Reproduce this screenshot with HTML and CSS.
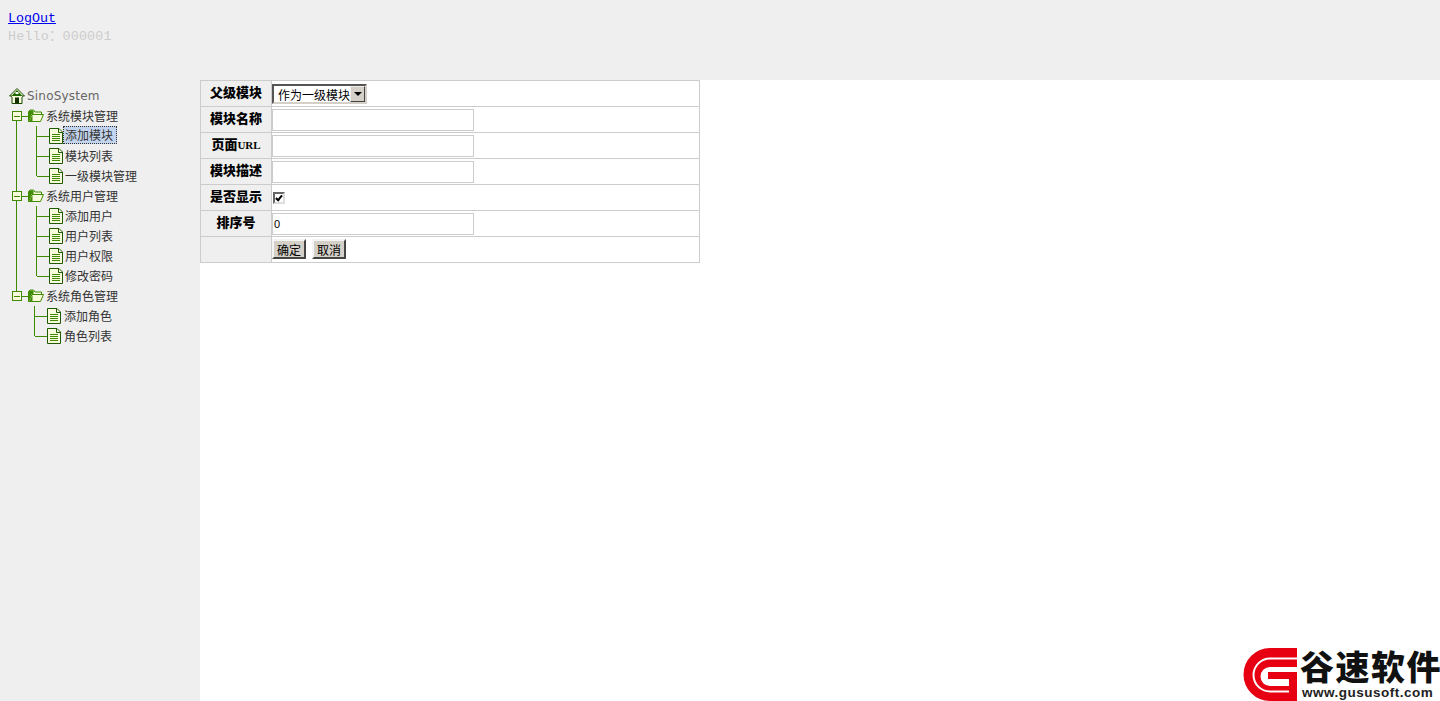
FILE: index.html
```html
<!DOCTYPE html>
<html>
<head>
    <title>SinoSystem</title>
    <link rel="stylesheet" href="styles.css">
</head>
<body>
    <svg class="defs" width="0" height="0">
        <symbol id="home" viewBox="0 0 16 16">
            <path d="M8 .5L.5 8H3v7.500h10V8h2.500z" fill="#f8fbdc" stroke="#1a4a00"/>
            <path d="M2.500 8L8 2l5.500 6z" fill="#1f6a00"/>
            <rect x="6.500" y="4" width="3" height="2" fill="#fff"/>
            <rect x="6" y="9.500" width="4" height="6" fill="#143000"/>
            <path d="M3 8h10v1H3z" fill="#f8fbdc"/>
        </symbol>
        <symbol id="folder" viewBox="0 0 16 14">
            <path d="M.5 12.500V2.500l1.500-1.500h3.500l1.500 2h6.500v2.500H4z" fill="#f8fbdc" stroke="#3f8a00"/>
            <path d="M.5 12.500L4 5.500h11.500l-3 7z" fill="#f8fbdc" stroke="#3f8a00"/>
            <path d="M1 1.500h4.500V5H3.500L1 11z" fill="#3f8a00"/>
            <path d="M1 13l3.500-7v7z" fill="#3f8a00"/>
        </symbol>
        <symbol id="doc" viewBox="0 0 14 16">
            <path d="M.5.500h9.500l3.500 3.500v11.500H.5z" fill="#f8fbdc" stroke="#1f5a00"/>
            <path d="M9.500.500v4h4" fill="none" stroke="#1f5a00"/>
            <path d="M3 6.500h8M3 8.500h8M3 10.500h8M3 12.500h8" stroke="#3f8a00"/>
        </symbol>
        <symbol id="minus" viewBox="0 0 10 10">
            <rect x=".5" y=".5" width="9" height="9" fill="#f8fbdc" stroke="#3f8a00"/>
            <path d="M2 5.500h6" stroke="#3f8a00"/>
        </symbol>
    </svg>

    <div class="top">
        <a href="#" class="logout">LogOut</a><br>
        <span class="hello">Hello：000001</span>
    </div>

    <div class="container">
        <div class="left">
            <div class="tree">
                <div class="node root">
                    <svg class="home"><use href="#home"/></svg>
                    <span class="root-text">SinoSystem</span>
                </div>

                <div class="node group">
                    <span class="pipe first"></span>
                    <svg class="minus"><use href="#minus"/></svg>
                    <span class="dash"></span>
                    <svg class="folder"><use href="#folder"/></svg>
                    <span class="label">系统模块管理</span>
                </div>
                <div class="node leaf">
                    <span class="pipe"></span><span class="pipe sub"></span><span class="elbow"></span>
                    <svg class="doc"><use href="#doc"/></svg>
                    <span class="label selected">添加模块</span>
                </div>
                <div class="node leaf">
                    <span class="pipe"></span><span class="pipe sub"></span><span class="elbow"></span>
                    <svg class="doc"><use href="#doc"/></svg>
                    <span class="label">模块列表</span>
                </div>
                <div class="node leaf">
                    <span class="pipe"></span><span class="pipe sub end"></span><span class="elbow"></span>
                    <svg class="doc"><use href="#doc"/></svg>
                    <span class="label">一级模块管理</span>
                </div>

                <div class="node group">
                    <span class="pipe"></span>
                    <svg class="minus"><use href="#minus"/></svg>
                    <span class="dash"></span>
                    <svg class="folder"><use href="#folder"/></svg>
                    <span class="label">系统用户管理</span>
                </div>
                <div class="node leaf">
                    <span class="pipe"></span><span class="pipe sub"></span><span class="elbow"></span>
                    <svg class="doc"><use href="#doc"/></svg>
                    <span class="label">添加用户</span>
                </div>
                <div class="node leaf">
                    <span class="pipe"></span><span class="pipe sub"></span><span class="elbow"></span>
                    <svg class="doc"><use href="#doc"/></svg>
                    <span class="label">用户列表</span>
                </div>
                <div class="node leaf">
                    <span class="pipe"></span><span class="pipe sub"></span><span class="elbow"></span>
                    <svg class="doc"><use href="#doc"/></svg>
                    <span class="label">用户权限</span>
                </div>
                <div class="node leaf">
                    <span class="pipe"></span><span class="pipe sub end"></span><span class="elbow"></span>
                    <svg class="doc"><use href="#doc"/></svg>
                    <span class="label">修改密码</span>
                </div>

                <div class="node group">
                    <span class="pipe end"></span>
                    <svg class="minus"><use href="#minus"/></svg>
                    <span class="dash"></span>
                    <svg class="folder"><use href="#folder"/></svg>
                    <span class="label">系统角色管理</span>
                </div>
                <div class="node leaf last-group">
                    <span class="pipe sub"></span><span class="elbow"></span>
                    <svg class="doc"><use href="#doc"/></svg>
                    <span class="label">添加角色</span>
                </div>
                <div class="node leaf last-group">
                    <span class="pipe sub end"></span><span class="elbow"></span>
                    <svg class="doc"><use href="#doc"/></svg>
                    <span class="label">角色列表</span>
                </div>
            </div>
        </div>

        <div class="main">
            <table class="form-table">
                <tr>
                    <th>父级模块</th>
                    <td>
                        <span class="select-box">
                            <select class="select-field"><option>作为一级模块</option></select>
                            <span class="select-arrow"></span>
                        </span>
                    </td>
                </tr>
                <tr>
                    <th>模块名称</th>
                    <td><input type="text" class="input-field"></td>
                </tr>
                <tr>
                    <th>页面<span class="latin">URL</span></th>
                    <td><input type="text" class="input-field"></td>
                </tr>
                <tr>
                    <th>模块描述</th>
                    <td><input type="text" class="input-field"></td>
                </tr>
                <tr>
                    <th>是否显示</th>
                    <td><input type="checkbox" class="check-field" checked></td>
                </tr>
                <tr>
                    <th>排序号</th>
                    <td><input type="text" class="input-field" value="0"></td>
                </tr>
                <tr>
                    <th></th>
                    <td>
                        <input type="button" class="btn" value="确定">
                        <input type="button" class="btn" value="取消">
                    </td>
                </tr>
            </table>
        </div>
    </div>

    <div class="brand">
        <svg class="brand-mark" viewBox="0 0 54 54">
            <path d="M54 1H27a26.500 26.500 0 0 0 0 53H54z" fill="#e60012"/>
            <path d="M54 11.500H27a16.500 16.500 0 0 0 0 33H46" fill="none" stroke="#fff" stroke-width="2"/>
            <path d="M54 20H27a9.500 9.500 0 0 0 0 19H46V32H25V25H54z" fill="#fff"/>
        </svg>
        <div class="brand-text">
            <div class="brand-name">谷速软件</div>
            <div class="brand-url">www.gususoft.com</div>
        </div>
    </div>
</body>
</html>
```

FILE: styles.css
```css
html, body {
    margin: 0;
    padding: 0;
    height: 100%;
}

body {
    font-family: "Noto Sans CJK SC", sans-serif;
    font-size: 12px;
    color: #000;
    background-color: #fff;
    overflow: hidden;
    position: relative;
}

.defs {
    display: block;
    height: 0;
}

.top {
    height: 70px;
    padding: 10px 8px 0;
    background-color: #efefef;
    font-family: "Liberation Mono", "Noto Sans CJK SC", monospace;
    font-size: 13.33px;
    line-height: 18px;
}

.logout {
    color: #00e;
}

.hello {
    color: #ccc;
    letter-spacing: .2px;
}

.container {
    display: flex;
    height: 621px;
}

.left {
    width: 200px;
    background-color: #efefef;
    padding-top: 6px;
    box-sizing: border-box;
}

.main {
    flex: 1;
}

/* tree */
.node {
    display: flex;
    align-items: center;
    height: 20px;
    position: relative;
    color: #333;
}

.root {
    padding-left: 9px;
}

.home {
    width: 16px;
    height: 16px;
    margin-right: 2px;
}

.root-text {
    font-family: "DejaVu Sans", sans-serif;
    font-size: 12px;
    letter-spacing: .2px;
    color: #666;
}

.group {
    padding-left: 12px;
}

.minus {
    width: 10px;
    height: 10px;
    position: relative;
}

.dash {
    width: 6px;
    height: 1px;
    background-color: #3f8a00;
}

.folder {
    width: 16px;
    height: 14px;
    margin-right: 2px;
}

.label {
    line-height: 16px;
    margin-bottom: 1px;
}

.pipe {
    position: absolute;
    left: 16px;
    top: 0;
    bottom: 0;
    width: 1px;
    background-color: #3f8a00;
}

.pipe.first {
    top: 10px;
}

.pipe.end {
    bottom: 10px;
}

.pipe.sub {
    left: 36px;
}

.last-group .pipe.sub {
    left: 34px;
}

.leaf {
    padding-left: 37px;
}

.last-group {
    padding-left: 35px;
}

.elbow {
    width: 12px;
    height: 1px;
    background-color: #3f8a00;
}

.doc {
    width: 14px;
    height: 16px;
}

.leaf .label {
    padding: 0 3px 0 1px;
    border: 1px dotted transparent;
}

.last-group .label {
    padding-left: 2px;
}

.leaf .selected {
    margin-bottom: 2px;
    background-color: #c3d5ee;
    border-color: #333;
}

/* form */
.form-table {
    width: 500px;
    border-collapse: collapse;
    table-layout: fixed;
}

.form-table th,
.form-table td {
    height: 25px;
    padding: 0;
    border: 1px solid #ccc;
}

.form-table th {
    width: 71px;
    padding-bottom: 4px;
    box-sizing: border-box;
    background-color: #efefef;
    font-size: 13px;
    font-weight: 900;
    text-align: center;
}

.latin {
    font-family: "Liberation Serif", serif;
    font-size: 11px;
}

.form-table td {
    background-color: #fff;
    font-size: 0;
}

.input-field {
    box-sizing: border-box;
    display: block;
    width: 202px;
    height: 22px;
    padding: 1px;
    border: 1px solid #ccc;
    font-family: "Liberation Sans", sans-serif;
    font-size: 11px;
    outline: none;
}

.select-box {
    display: inline-block;
    position: relative;
    vertical-align: middle;
}

.select-field {
    appearance: none;
    box-sizing: border-box;
    display: block;
    width: 95px;
    height: 20px;
    padding: 0 0 1px 4px;
    border: 2px solid;
    border-color: #555 #d4d0c8 #d4d0c8 #555;
    border-radius: 0;
    background-color: #fff;
    color: #000;
    font-family: "Noto Sans CJK SC", sans-serif;
    font-size: 12px;
}

.select-arrow {
    position: absolute;
    top: 2px;
    right: 2px;
    box-sizing: border-box;
    width: 15px;
    height: 16px;
    background-color: #d4d0c8;
    border: 1px solid;
    border-color: #eee #444 #444 #eee;
}

.select-arrow::after {
    content: "";
    position: absolute;
    left: 3px;
    top: 5px;
    border-style: solid;
    border-width: 4px 4px 0;
    border-color: #000 transparent transparent;
}

.check-field {
    appearance: none;
    display: block;
    box-sizing: border-box;
    position: relative;
    width: 12px;
    height: 12px;
    margin: 0 0 0 1px;
    background-color: #fff;
    border: 2px solid;
    border-color: #666 #ddd #ddd #666;
}

.check-field::after {
    content: "";
    position: absolute;
    left: 2px;
    top: 0;
    width: 2px;
    height: 5px;
    border: solid #000;
    border-width: 0 2px 2px 0;
    transform: rotate(40deg);
}

.btn {
    box-sizing: border-box;
    width: 34px;
    height: 20px;
    margin: 0 6px 2px 0;
    padding: 0 0 2px;
    background-color: #d4d0c8;
    border: 2px solid;
    border-color: #f4f4f4 #444 #444 #f4f4f4;
    border-radius: 0;
    color: #000;
    font-family: "Noto Sans CJK SC", sans-serif;
    font-size: 12px;
    vertical-align: top;
}

/* watermark */
.brand {
    position: absolute;
    right: 0;
    bottom: 0;
    display: flex;
    gap: 3px;
    background-color: #fff;
    padding-left: 3px;
}

.brand-mark {
    width: 54px;
    height: 54px;
}

.brand-text {
    width: 140px;
}

.brand-name {
    font-family: "Noto Sans CJK SC", sans-serif;
    font-size: 34px;
    font-weight: 900;
    line-height: 38px;
    letter-spacing: 1.500px;
    color: #111;
    white-space: nowrap;
}

.brand-url {
    padding-left: 2px;
    font-family: "Liberation Sans", sans-serif;
    font-size: 13.5px;
    font-weight: bold;
    line-height: 16px;
    letter-spacing: .5px;
    color: #222;
    white-space: nowrap;
}
```
